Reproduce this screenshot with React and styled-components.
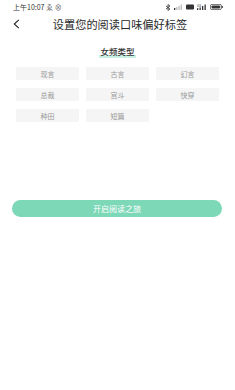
import styled, { createGlobalStyle } from 'styled-components';

const GlobalStyle = createGlobalStyle`
    html, body {
        margin: 0;
        padding: 0;
        background: #ffffff;
    }
    body {
        font-family: "Noto Sans CJK SC", "Noto Sans", sans-serif;
    }
`;

const tags = ['现言', '古言', '幻言', '总裁', '宫斗', '快穿', '种田', '短篇'];

function StatusIcons() {
    return (
        <StatusRight>
            <svg width="6" height="7" viewBox="0 0 6 7">
                <path d="M1 2l4 3-2 1.5V0.5L5 2 1 5" fill="none" stroke="#333" strokeWidth="0.8" />
            </svg>
            <svg width="9" height="6" viewBox="0 0 9 6">
                <rect x="0" y="4" width="1.3" height="2" fill="#333" />
                <rect x="2.2" y="3" width="1.3" height="3" fill="#bbb" />
                <rect x="4.4" y="2" width="1.3" height="4" fill="#bbb" />
                <rect x="6.6" y="0.5" width="1.3" height="5.5" fill="#bbb" />
            </svg>
            <svg width="8" height="6" viewBox="0 0 8 6">
                <rect x="0" y="0.5" width="8" height="5" rx="1" fill="#333" />
            </svg>
            <svg width="10" height="6" viewBox="0 0 10 6">
                <text x="0" y="2.6" fontSize="3" fill="#333" fontFamily="Liberation Sans">4G</text>
                <rect x="0" y="4.2" width="1.3" height="1.8" fill="#333" />
                <rect x="2.5" y="3.4" width="1.3" height="2.6" fill="#333" />
                <rect x="5" y="2" width="1.3" height="4" fill="#333" />
                <rect x="7.5" y="0.5" width="1.3" height="5.5" fill="#333" />
            </svg>
            <svg width="13" height="6" viewBox="0 0 13 6">
                <rect x="0.4" y="0.4" width="11" height="5.2" rx="1.5" fill="none" stroke="#333" strokeWidth="0.7" />
                <rect x="1.6" y="1.5" width="8.5" height="3" rx="0.8" fill="#333" />
                <rect x="11.8" y="2" width="1" height="2" fill="#333" />
            </svg>
        </StatusRight>
    );
}

export default function App() {
    return (
        <Page>
            <GlobalStyle />
            <StatusBar>
                <StatusLeft>上午10:07 <Faint>ゑ ⊗</Faint></StatusLeft>
                <StatusIcons />
            </StatusBar>
            <Header>
                <BackButton>
                    <svg width="7" height="10" viewBox="0 0 7 10">
                        <path d="M5.8 0.8L1.3 5l4.5 4.2" fill="none" stroke="#222" strokeWidth="1.1" />
                    </svg>
                </BackButton>
                <Title>设置您的阅读口味偏好标签</Title>
            </Header>
            <SectionTitle>
                <Highlight>女频类型</Highlight>
            </SectionTitle>
            <TagGrid>
                {tags.map((tag) => (
                    <Tag key={tag}>{tag}</Tag>
                ))}
            </TagGrid>
            <StartButton>开启阅读之旅</StartButton>
        </Page>
    );
}

const Page = styled.div`
    width: 235px;
    height: 390px;
    background: #ffffff;
    display: flex;
    flex-direction: column;
`;

const StatusBar = styled.div`
    height: 14px;
    padding: 0 12px 0 13px;
    display: flex;
    align-items: center;
    justify-content: space-between;
`;

const StatusLeft = styled.div`
    font-family: "Noto Sans CJK SC", sans-serif;
    font-size: 7px;
    color: #333;
    line-height: 1;
`;

const Faint = styled.span`
    color: #555;
`;

const StatusRight = styled.div`
    display: flex;
    align-items: center;
    gap: 3px;
`;

const Header = styled.div`
    height: 20px;
    display: flex;
    align-items: center;
    padding: 0 0 0 13px;
`;

const BackButton = styled.div`
    width: 7px;
    display: flex;
    align-items: center;
`;

const Title = styled.div`
    flex: 1;
    text-align: center;
    font-size: 11.2px;
    color: #2a2a2a;
    margin-right: 15px;
`;

const SectionTitle = styled.div`
    margin-top: 11px;
    height: 14px;
    display: flex;
    justify-content: center;
`;

const Highlight = styled.span`
    font-size: 8.5px;
    font-weight: 500;
    color: #333;
    line-height: 12px;
    background: linear-gradient(to bottom, transparent 68%, #c9f0e2 68%, #c9f0e2 92%, transparent 92%);
    padding: 0 1px;
`;

const TagGrid = styled.div`
    margin-top: 8px;
    padding: 0 16px;
    display: grid;
    grid-template-columns: repeat(3, 63px);
    column-gap: 7px;
    row-gap: 8px;
`;

const Tag = styled.div`
    height: 13px;
    background: #f5f5f5;
    border-radius: 1px;
    display: flex;
    align-items: center;
    justify-content: center;
    font-size: 7px;
    color: #999;
`;

const StartButton = styled.div`
    margin: 78px 13px 0 12px;
    height: 17px;
    border-radius: 9px;
    background: #7dd8b8;
    color: #ffffff;
    display: flex;
    align-items: center;
    justify-content: center;
    font-size: 8px;
`;
